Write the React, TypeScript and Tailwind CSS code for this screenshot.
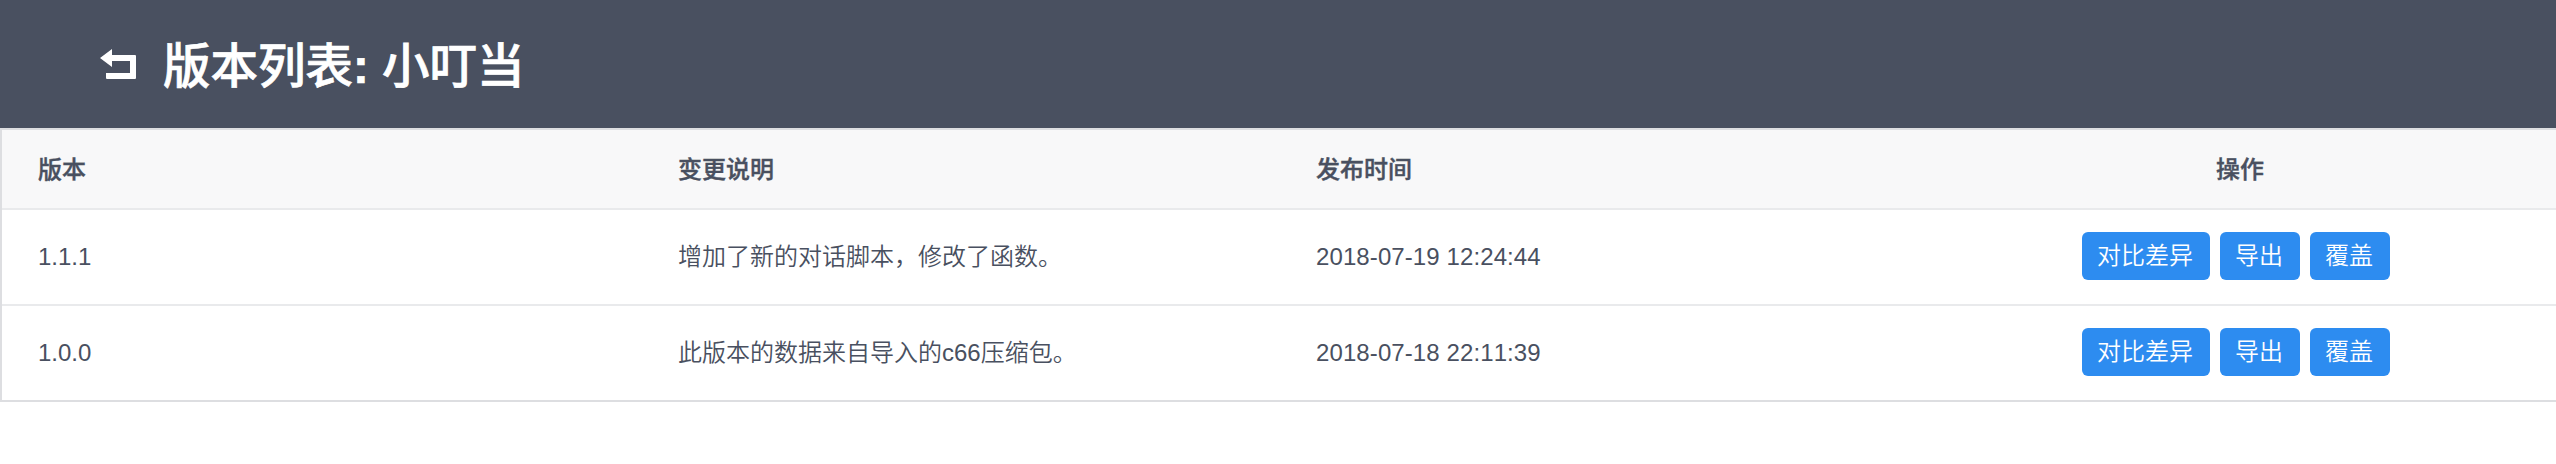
const rows = [
  { version: '1.1.1', note: '增加了新的对话脚本，修改了函数。', time: '2018-07-19 12:24:44' },
  { version: '1.0.0', note: '此版本的数据来自导入的c66压缩包。', time: '2018-07-18 22:11:39' },
];
const actions = ['对比差异', '导出', '覆盖'];
const grid = 'grid grid-cols-[640px_638px_638px_640px]';

export default function App() {
  return (
    <div className="h-[464px] w-[2556px] overflow-hidden bg-white font-['Liberation_Sans','Noto_Sans_CJK_SC',sans-serif] text-[24px] text-[#495060]">
      <header className="flex h-32 items-center bg-[#495060] pl-[100px] text-white">
        <svg className="h-[30px] w-9" viewBox="0 0 36 30" fill="currentColor">
          <path d="M0 9 12 0v6h23q1 0 1 1v22q0 1-1 1H7q-1 0-1-1v-5h24V12H12v6z" />
        </svg>
        <h1 className="ml-[27px] pt-[5px] text-[47.5px] font-medium leading-none [-webkit-text-stroke:0.7px_currentColor]">版本列表<span className="font-bold">:</span> 小叮当</h1>
      </header>
      <main className="border-y-2 border-l-2 border-[#dddee1]">
        <div className={`${grid} h-20 items-center border-b-2 border-[#e9eaec] bg-[#f8f8f9] pt-0.5 font-medium [-webkit-text-stroke:0.4px_currentColor]`}>
          <div className="pl-9">版本</div>
          <div className="pl-9">变更说明</div>
          <div className="pl-9">发布时间</div>
          <div className="pl-1 text-center">操作</div>
        </div>
        {rows.map((r) => (
          <div key={r.version} className={`${grid} h-24 items-center border-b-2 border-[#e9eaec] font-[350] [font-kerning:none] last:h-[94px] last:border-b-0`}>
            <div className="pl-9">{r.version}</div>
            <div className="pl-9">{r.note}</div>
            <div className="pl-9 tracking-[0.1px]">{r.time}</div>
            <div className="flex justify-center gap-[10px] pb-0.5 pr-1">
              {actions.map((a) => (
                <button key={a} className="h-12 rounded-md bg-[#2d8cf0] pl-[15px] pr-[17px] text-white">{a}</button>
              ))}
            </div>
          </div>
        ))}
      </main>
    </div>
  );
}
